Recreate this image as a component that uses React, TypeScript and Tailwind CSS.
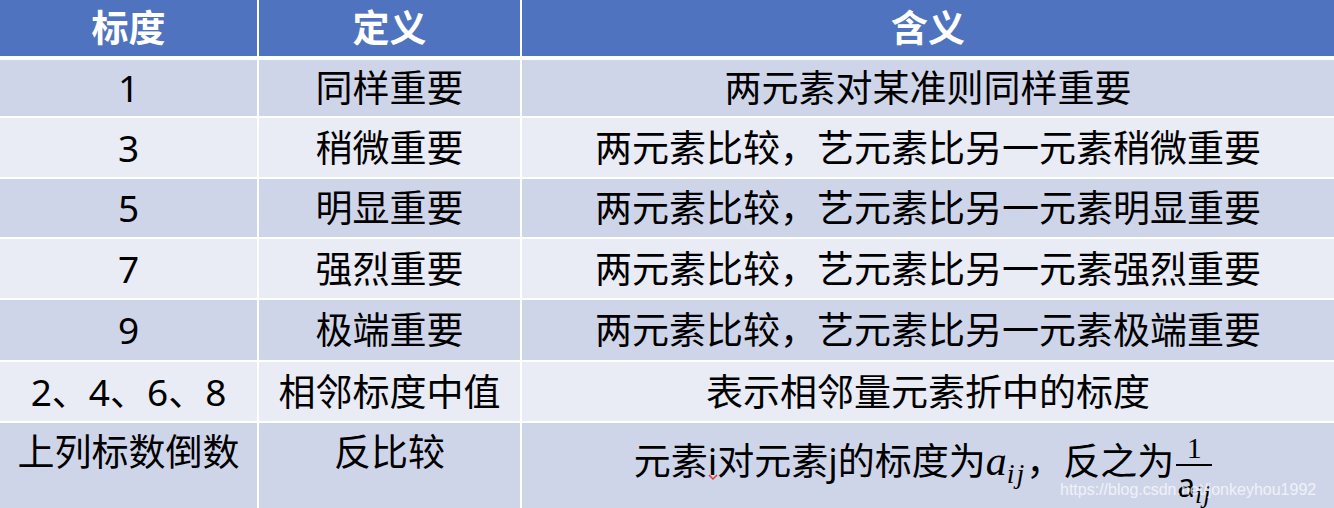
const rows = [
  { scale: "1", name: "同样重要", desc: "两元素对某准则同样重要", h: "h-[56px]", bg: "bg-[#CFD5E9]" },
  { scale: "3", name: "稍微重要", desc: "两元素比较，艺元素比另一元素稍微重要", h: "h-[59px]", bg: "bg-[#E9EBF5]" },
  { scale: "5", name: "明显重要", desc: "两元素比较，艺元素比另一元素明显重要", h: "h-[58px]", bg: "bg-[#CFD5E9]" },
  { scale: "7", name: "强烈重要", desc: "两元素比较，艺元素比另一元素强烈重要", h: "h-[59px]", bg: "bg-[#E9EBF5]" },
  { scale: "9", name: "极端重要", desc: "两元素比较，艺元素比另一元素极端重要", h: "h-[60px]", bg: "bg-[#CFD5E9]" },
  { scale: "2、4、6、8", name: "相邻标度中值", desc: "表示相邻量元素折中的标度", h: "h-[59px]", bg: "bg-[#E9EBF5]" },
];

const font = "font-['Noto_Sans','Noto_Sans_CJK_SC',sans-serif]";

const App = () => {
  return (
    <div className={`relative w-[1334px] h-[508px] overflow-hidden bg-white text-black ${font}`}>
      <div className="grid grid-cols-[257px_261px_812px] gap-x-[2px] h-[53px] text-[37px] font-bold text-white">
        <div className="bg-[#4F73BE] flex items-center justify-center">标度</div>
        <div className="bg-[#4F73BE] flex items-center justify-center">定义</div>
        <div className="bg-[#4F73BE] flex items-center justify-center">含义</div>
      </div>
      <div className="mt-[7px] flex flex-col gap-y-[2px] text-[37px]">
        {rows.map((row) => (
          <div key={row.scale} className={`grid grid-cols-[257px_261px_812px] gap-x-[2px] ${row.h}`}>
            <div className={`${row.bg} flex items-center justify-center`}>{row.scale}</div>
            <div className={`${row.bg} flex items-center justify-center`}>{row.name}</div>
            <div className={`${row.bg} flex items-center justify-center`}>{row.desc}</div>
          </div>
        ))}
        <div className="grid grid-cols-[257px_261px_812px] gap-x-[2px] h-[90px]">
          <div className="bg-[#CFD5E9] flex justify-center pt-[1px]">上列标数倒数</div>
          <div className="bg-[#CFD5E9] flex justify-center pt-[1px]">反比较</div>
          <div className="bg-[#CFD5E9] flex justify-center items-start pt-[13px] pr-[10px]">
            <span className="leading-[1.2]">
              元素
              <span className="relative">
                i
                <svg className="absolute left-[0px] top-[39px]" width="10" height="6" viewBox="0 0 10 6">
                  <path d="M1 1 L5 5 L9 1" fill="none" stroke="#d9402c" strokeWidth="1.5" />
                </svg>
              </span>
              对元素j的标度为
              <span className="font-['Liberation_Serif',serif] italic text-[42px]">a</span>
              <span className="font-['Liberation_Serif',serif] italic text-[28px] relative top-[8px] tracking-[2px]">ij</span>
              ，反之为
            </span>
            <span className="inline-flex flex-col items-center ml-[2px] mt-[-4px]">
              <span className="font-['Liberation_Serif',serif] text-[30px] leading-[32px]">1</span>
              <span className="w-[36px] h-[2px] bg-black"></span>
              <span className="leading-[34px] whitespace-nowrap">
                <span className="text-[32px]">a</span>
                <span className="font-['Liberation_Serif',serif] italic text-[26px] relative top-[6px] tracking-[1px]">ij</span>
              </span>
            </span>
          </div>
        </div>
      </div>
      <div className="absolute left-[1060px] top-[478px] text-[16px] font-['Liberation_Sans',sans-serif] text-white/70">
        https://blog.csdn.net/jonkeyhou1992
      </div>
    </div>
  );
};

export default App;
